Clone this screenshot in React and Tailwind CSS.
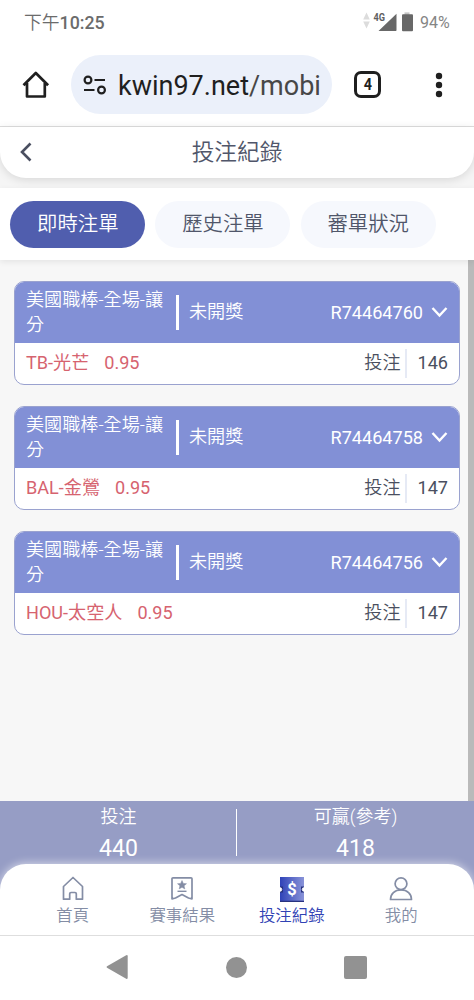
import React from "react";

const TABS = ["即時注單", "歷史注單", "審單狀況"];

const BETS = [
  { id: "R74464760", pick: "TB-光芒", odds: "0.95", stake: "146" },
  { id: "R74464758", pick: "BAL-金鶯", odds: "0.95", stake: "147" },
  { id: "R74464756", pick: "HOU-太空人", odds: "0.95", stake: "147" },
];

function StatusBar() {
  return (
    <div className="h-11 shrink-0 flex items-center justify-between pl-6 pr-6 pt-[1px] text-[#6b6b6b]">
      <div className="text-[17.8px] font-medium leading-none"><span className="font-[350]">下午</span>10:25</div>
      <div className="flex items-center">
        <svg width="54" height="24" viewBox="0 0 54 24">
          <path d="M6.500 1.500l3.300 7H3.200zM6.500 17.500l3.300-7H3.200z" fill="#dcdcdc" />
          <path d="M36.500 2.700v16.200a1.200 1.200 0 0 1-1.200 1.200H18.500z" fill="#686868" />
          <text x="13.500" y="9.500" fontSize="11.500" fontWeight="700" fill="#606060" textLength="11.500" lengthAdjust="spacingAndGlyphs">4G</text>
          <path d="M44.500 1.400h5v3h-5z" fill="#c4c4c4" />
          <path d="M42 4.200a1 1 0 0 1 1-1h9a1 1 0 0 1 1 1v15a1 1 0 0 1-1 1h-9a1 1 0 0 1-1-1z" fill="#686868" />
        </svg>
        <span className="ml-[6px] mt-[1px] w-[30px] text-[16px] leading-none text-[#858585] whitespace-nowrap">94%</span>
      </div>
    </div>
  );
}

function BrowserBar() {
  return (
    <div className="h-[83px] shrink-0 flex items-center pb-[1px] border-b border-[#dedede] text-[#1f1f1f]">
      <svg className="ml-[22px] shrink-0" width="28" height="30" viewBox="0 0 28 30" fill="none" stroke="currentColor" strokeWidth="2.700" strokeLinejoin="round">
        <path d="M1.500 15.300L13.800 3l12.300 12.300M5 13v13.500h17.800V13" />
      </svg>
      <div className="ml-[21px] w-[261px] h-[59px] shrink-0 rounded-full bg-[#ebf0fa] flex items-center pl-3">
        <svg width="24" height="22" viewBox="0 0 24 22" fill="none" stroke="currentColor" strokeWidth="2.200">
          <circle cx="5" cy="6" r="3.400" />
          <path d="M11.500 6H22M1 16h10.500" />
          <circle cx="18.500" cy="16" r="3.400" />
        </svg>
        <div className="ml-[11px] mt-[3px] w-[204px] overflow-hidden whitespace-nowrap text-[27px] leading-8">
          kwin97.net<span className="text-[#474747]">/mobi</span>
        </div>
      </div>
      <div className="ml-[22px] w-[27px] h-[27px] rounded-[7px] border-[3px] border-current flex items-center justify-center text-[17px] font-bold leading-none">
        <span className="scale-x-85">4</span>
      </div>
      <svg className="ml-[54px]" width="8" height="28" viewBox="0 0 8 28" fill="currentColor">
        <circle cx="4" cy="5" r="3.200" />
        <circle cx="4" cy="14" r="3.200" />
        <circle cx="4" cy="23" r="3.200" />
      </svg>
    </div>
  );
}

function BetCard({ bet }) {
  return (
    <div className="h-[104px] rounded-[10px] border border-[#9aa2cf] bg-white overflow-hidden text-[18.1px]">
      <div className="h-[61px] bg-[#8290d6] text-white flex items-center pl-[11px] pr-[11px]">
        <div className="w-[140px] leading-[25px] pb-[1px] font-[350]">美國職棒-全場-讓分</div>
        <div className="ml-[10px] w-[3px] h-[35px] bg-white" />
        <div className="ml-[10px] pb-[1px] font-[350]">未開獎</div>
        <div className="ml-auto">{bet.id}</div>
        <svg className="ml-[8px] mb-[1px]" width="17" height="12" viewBox="0 0 17 12" fill="none" stroke="currentColor" strokeWidth="2.400">
          <path d="M1.500 2l7 7.500 7-7.500" />
        </svg>
      </div>
      <div className="h-[40px] flex items-center px-[11px] text-[#d6636f]">
        <span>{bet.pick}</span>
        <span className="ml-[15px]">{bet.odds}</span>
        <span className="ml-auto text-[#4a4f60] font-[350]">投注</span>
        <div className="ml-[5px] mr-[10px] h-[29px] w-[2px] bg-[#e6eaf5]" />
        <span className="text-[#4a4f60]">{bet.stake}</span>
      </div>
    </div>
  );
}

function Total({ label, value }) {
  return (
    <div className="flex-1 flex flex-col items-center pt-[1px]">
      <div className="text-[18px] leading-[30px] font-[350]">{label}</div>
      <div className="text-[23px] leading-[33px]">{value}</div>
    </div>
  );
}

function NavItem({ label, active, children }) {
  return (
    <div className={`w-[109.5px] flex flex-col items-center pt-[11px] ${active ? "text-[#3042b4]" : "text-[#848da5]"}`}>
      <svg width="28" height="28" viewBox="0 0 28 28" fill="none" stroke="currentColor" strokeWidth="1.700" strokeLinejoin="round">
        {children}
      </svg>
      <div className="mt-[1px] text-[16.400px] leading-6 font-[350]">{label}</div>
    </div>
  );
}

export default function App() {
  return (
    <div className="w-[474px] h-[1000px] flex flex-col overflow-hidden bg-white font-['Roboto','Noto_Sans_CJK_TC',sans-serif]">
      <StatusBar />
      <BrowserBar />

      <div className="bg-[#f5f5f5] h-[674px] shrink-0 flex flex-col">
        <header className="relative h-[51px] shrink-0 bg-white rounded-b-[26px] shadow-[0_2px_10px_rgba(0,0,0,0.12)] flex items-center justify-center pt-[1px] text-[#50566a]">
          <svg className="absolute left-[19px] top-[15px]" width="13" height="20" viewBox="0 0 13 20" fill="none" stroke="#4a4f60" strokeWidth="2.600">
            <path d="M11.500 1.500L3 10l8.500 8.500" />
          </svg>
          <h1 className="text-[22.700px] leading-none font-[350]">投注紀錄</h1>
        </header>

        <div className="relative mt-[10px] h-[72px] shrink-0 bg-white shadow-[0_2px_6px_rgba(0,0,0,0.08)] flex items-center pt-[1px] pl-[10.300px] gap-[10.200px]">
          {TABS.map((t, i) => (
            <div
              key={t}
              className={`w-[135px] h-[47px] rounded-full flex items-center justify-center text-[20.4px] font-[350] ${
                i === 0 ? "bg-[#505eae] text-white" : "bg-[#f6f8fd] text-[#50566a]"
              }`}
            >
              {t}
            </div>
          ))}
        </div>

        <div className="flex-1 flex bg-[#f7f7f7]">
          <div className="flex-1 pt-[21px] pl-[14px] pr-2 flex flex-col gap-[21px]">
            {BETS.map((b) => (
              <BetCard key={b.id} bet={b} />
            ))}
          </div>
          <div className="w-[6px] bg-[#bababa]" />
        </div>
      </div>

      <div className="h-[134px] shrink-0 flex flex-col bg-[#969dc5]">
        <div className="h-[63px] shrink-0 flex text-white">
          <Total label="投注" value="440" />
          <div className="-ml-[1px] w-[1px] h-[47px] mt-2 bg-white" />
          <Total label="可贏(參考)" value="418" />
        </div>
        <nav className="h-[71px] bg-white rounded-t-[26px] shadow-[0_-1px_8px_rgba(255,255,255,0.6)] flex justify-center">
          <NavItem label="首頁">
            <path d="M4.500 11.500L14 2.500l9.500 9v12.700h-6.200v-5.400a1.300 1.300 0 0 0-1.300-1.300h-4a1.300 1.300 0 0 0-1.300 1.300v5.400H4.500z" />
          </NavItem>
          <NavItem label="賽事結果">
            <path d="M4 3.800a1 1 0 0 1 1-1h18a1 1 0 0 1 1 1v20l-3.500-.8-6.500-3.500L7.500 23l-3.500.8z" />
            <path d="M14 5.500l1.300 2.900 3.200.3-2.400 2.100.7 3.100-2.800-1.600-2.800 1.600.7-3.100-2.400-2.100 3.200-.3z" fill="currentColor" strokeWidth="0.500" />
            <path d="M9.500 16.300h9" strokeWidth="1.400" />
          </NavItem>
          <NavItem label="投注紀錄" active>
            <defs>
              <linearGradient id="ticket" x1="0" x2="1">
                <stop offset="0" stopColor="#2f43b8" />
                <stop offset="1" stopColor="#8993d8" />
              </linearGradient>
            </defs>
            <path d="M2 2h24v25H2z" fill="url(#ticket)" stroke="none" />
            <path d="M2 25.700h24v1.300H2zM2 11.500h3v6H2zM23 11.500h3v6h-3z" fill="#27327f" stroke="none" />
            <path d="M2 12.700a1.800 1.800 0 0 1 0 3.600zM26 12.700a1.800 1.800 0 0 0 0 3.600z" fill="#fff" stroke="#fff" strokeWidth="0.800" />
            <text x="14" y="20" textAnchor="middle" fontSize="16.500" fontWeight="700" fill="#fff" stroke="none">$</text>
          </NavItem>
          <NavItem label="我的">
            <circle cx="14" cy="8.700" r="5.900" />
            <path d="M3.500 24.500c0-5.700 4.200-9.700 10.500-9.700s10.500 4 10.500 9.700z" />
          </NavItem>
        </nav>
      </div>

      <div className="h-[65px] shrink-0 border-t border-[#dedede] flex items-center justify-center gap-[97px] pb-[2px] pr-[2px]">
        <svg width="24" height="26" viewBox="0 0 24 26" fill="#929292">
          <path d="M21.200 1.300L2 12.300q-1 .7 0 1.400l19.200 11q1.500.8 1.500-.9V2.200q0-1.700-1.500-.9z" />
        </svg>
        <div className="w-[21px] h-[21px] rounded-full bg-[#929292]" />
        <div className="w-[23px] h-[23px] rounded-[2px] bg-[#929292]" />
      </div>
    </div>
  );
}
